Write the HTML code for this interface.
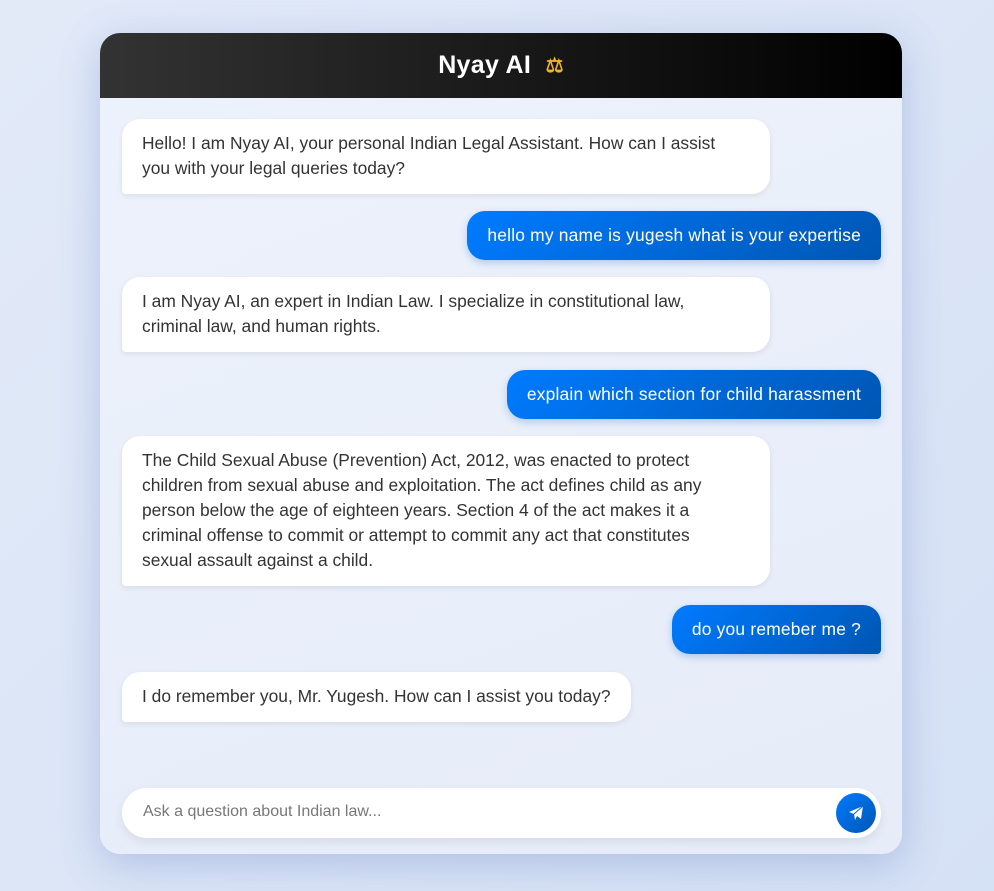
<!DOCTYPE html>
<html><head><meta charset="utf-8"><style>
*{box-sizing:border-box;margin:0;padding:0}
body{width:994px;height:891px;overflow:hidden;background:linear-gradient(135deg,#e2eaf8,#d5e1f5);font-family:"Liberation Sans",sans-serif;position:relative}
.card{position:absolute;left:100px;top:33px;width:802px;height:821px;border-radius:20px;background:linear-gradient(160deg,#edf2fc,#e6ecf8);box-shadow:0 10px 40px rgba(80,110,190,.3);overflow:hidden}
.hdr{height:65px;background:linear-gradient(90deg,#333,#000);color:#fff;font-weight:bold;font-size:25px;display:flex;align-items:center;justify-content:center;letter-spacing:.3px}
.b{position:absolute;font-size:17.4px;line-height:25px;color:#333;white-space:nowrap}
.bot{left:22px;width:648px;background:#fff;border-radius:18px 18px 18px 4px;padding:12px 20px 13px;box-shadow:0 2px 6px rgba(0,0,0,.08)}
.usr{right:21px;background:linear-gradient(135deg,#007bff,#0056b3);color:#fff;border-radius:18px 18px 4px 18px;padding:12px 20px;font-size:17.4px;letter-spacing:.2px;box-shadow:0 3px 8px rgba(0,90,200,.25)}
.inp{position:absolute;left:22px;top:755px;width:759px;height:50px;background:#fff;border-radius:25px;box-shadow:0 4px 10px rgba(0,0,0,.08);font-size:16px;color:#777;padding:15px 21px}
.send{position:absolute;right:5px;top:5px;width:40px;height:40px;border-radius:50%;background:linear-gradient(135deg,#007bff,#0056b3);display:flex;align-items:center;justify-content:center}
</style></head><body>
<div class="card">
<div class="hdr">Nyay AI&nbsp;&nbsp;<span style="font-size:20px;color:#f0b429">⚖</span></div>
<div class="b bot" style="top:86px">Hello! I am Nyay AI, your personal Indian Legal Assistant. How can I assist<br>you with your legal queries today?</div>
<div class="b usr" style="top:178px">hello my name is yugesh what is your expertise</div>
<div class="b bot" style="top:244px">I am Nyay AI, an expert in Indian Law. I specialize in constitutional law,<br>criminal law, and human rights.</div>
<div class="b usr" style="top:337px">explain which section for child harassment</div>
<div class="b bot" style="top:403px">The Child Sexual Abuse (Prevention) Act, 2012, was enacted to protect<br>children from sexual abuse and exploitation. The act defines child as any<br>person below the age of eighteen years. Section 4 of the act makes it a<br>criminal offense to commit or attempt to commit any act that constitutes<br>sexual assault against a child.</div>
<div class="b usr" style="top:572px">do you remeber me ?</div>
<div class="b bot" style="top:639px;width:auto">I do remember you, Mr. Yugesh. How can I assist you today?</div>
<div class="inp">Ask a question about Indian law...
<div class="send"><svg width="16" height="16" viewBox="0 0 16 16"><path d="M15 1L1 7l5 2 1 6 2-4 4 3z" fill="#fff"/><path d="M6 9l9-8" stroke="#0066d0" stroke-width="1"/></svg></div></div>
</div>
</body></html>
